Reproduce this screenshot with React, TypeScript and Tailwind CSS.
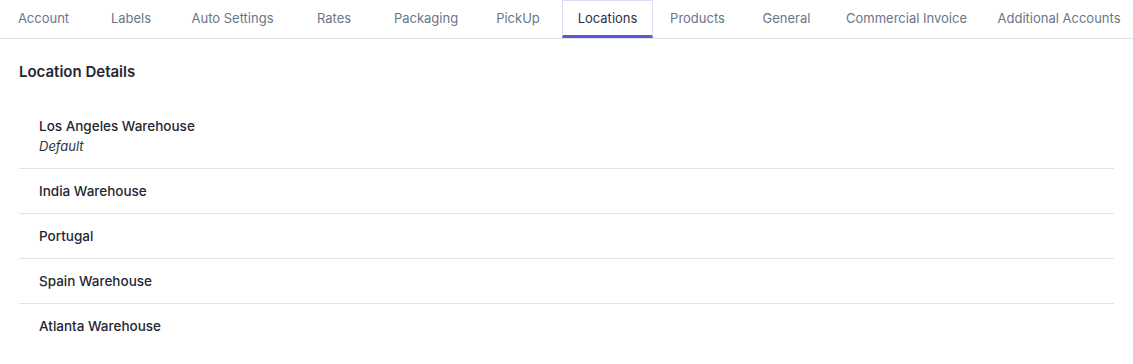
import clsx from 'clsx';

const tabs = [
  { label: 'Account', width: 'w-[87px]' },
  { label: 'Labels', width: 'w-[88px]' },
  { label: 'Auto Settings', width: 'w-[115px]' },
  { label: 'Rates', width: 'w-[88px]' },
  { label: 'Packaging', width: 'w-[96px]' },
  { label: 'PickUp', width: 'w-[88px]' },
  { label: 'Locations', width: 'w-[91px]' },
  { label: 'Products', width: 'w-[89px]' },
  { label: 'General', width: 'w-[89px]' },
  { label: 'Commercial Invoice', width: 'w-[151px]' },
  { label: 'Additional Accounts', width: 'w-[154px]' },
];

const activeTab = 'Locations';

const locations = [
  { name: 'Los Angeles Warehouse', isDefault: true },
  { name: 'India Warehouse' },
  { name: 'Portugal' },
  { name: 'Spain Warehouse' },
  { name: 'Atlanta Warehouse' },
];

export default function App() {
  return (
    <div className="min-h-screen overflow-hidden bg-white font-['Inter',sans-serif] text-[#1f2937]">
      {/* Tabs */}
      <nav className="flex border-b border-[#e2e2ea]">
        {tabs.map(({ label, width }) => (
          <button
            key={label}
            className={clsx(
              'h-[38px] shrink-0 text-center text-[13px] leading-5 whitespace-nowrap',
              width,
              label === activeTab
                ? 'border-x border-t border-b-[3px] border-x-[#dcdcf8] border-t-[#dcdcf8] border-b-[#5a5bd4] text-[#2d3340]'
                : 'pb-[2px] text-[#6b7587]'
            )}
          >
            {label}
          </button>
        ))}
      </nav>

      {/* Location details */}
      <section className="px-[19px] pt-[21px]">
        <h2 className="text-[15px] leading-6 font-semibold text-[#1f2733]">Location Details</h2>
        <ul className="mt-5">
          {locations.map((loc, i) => (
            <li
              key={loc.name}
              className={clsx(
                'px-5 py-3',
                i < locations.length - 1 && 'border-b border-[#e2e2ea]'
              )}
            >
              <div className="text-[13.5px] leading-5 font-medium text-[#1f2733]">{loc.name}</div>
              {loc.isDefault && (
                <div className="text-[13px] leading-5 italic text-[#2d3340]">Default</div>
              )}
            </li>
          ))}
        </ul>
      </section>
    </div>
  );
}
